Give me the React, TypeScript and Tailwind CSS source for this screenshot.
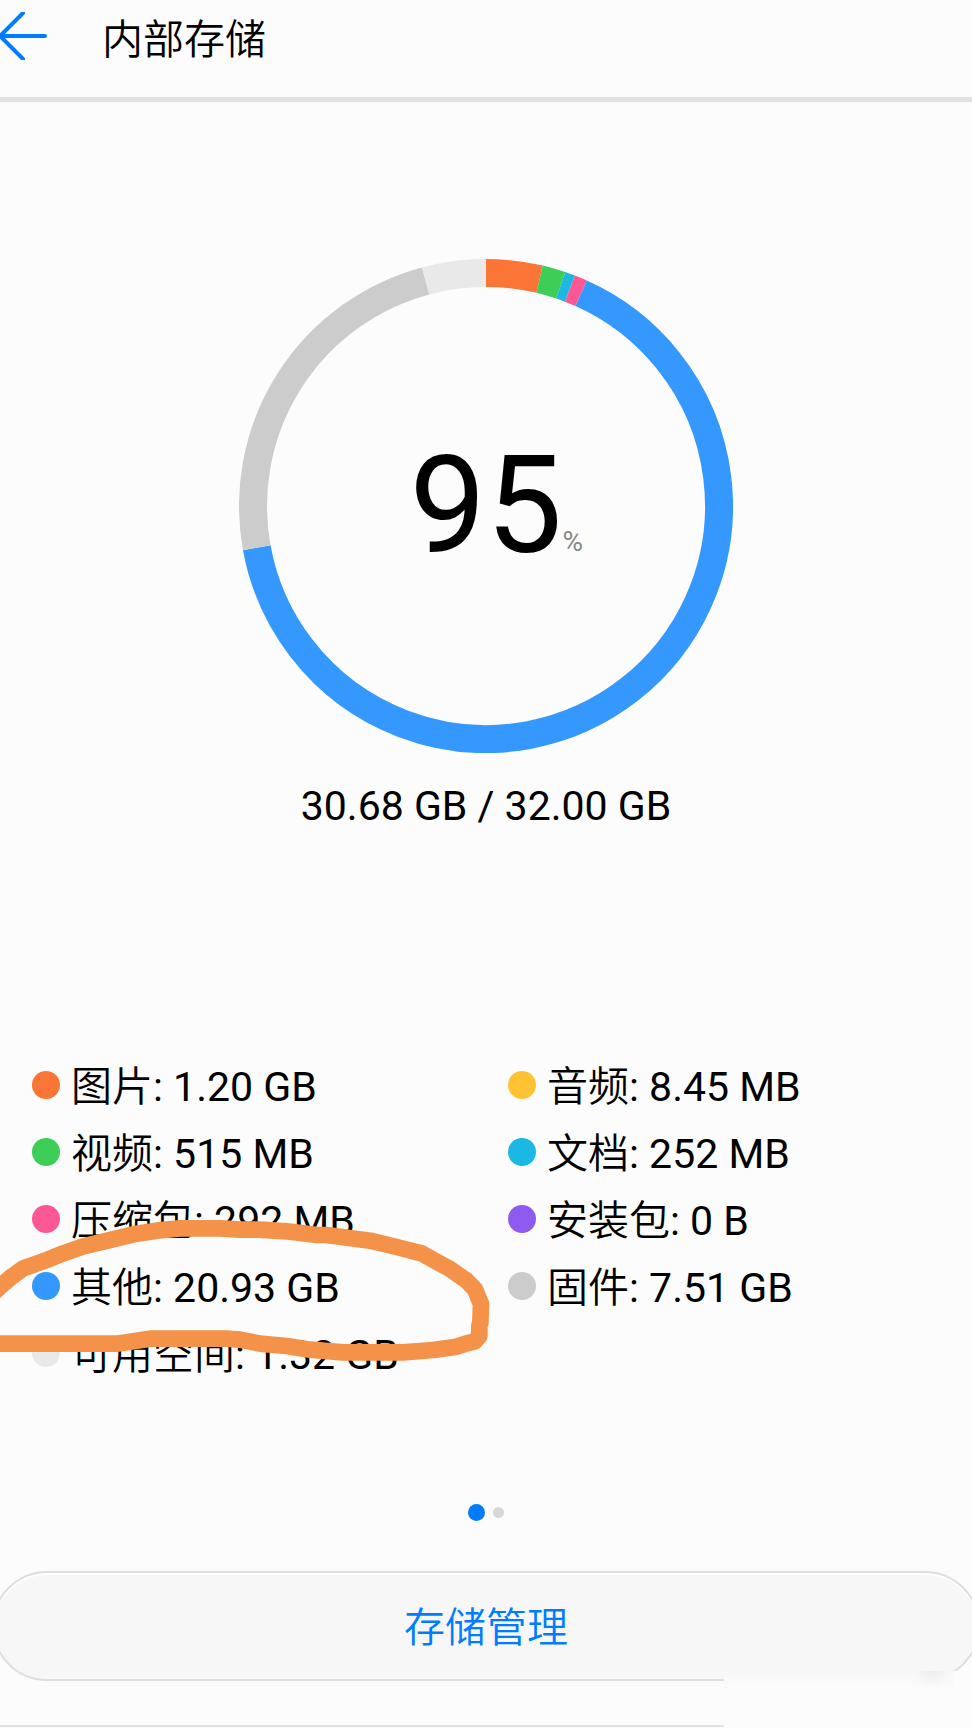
interface StorageItem {
  label: string;
  value: string;
  dot: string;
}

interface Segment {
  from: number;
  to: number;
  color: string;
}

const items: StorageItem[] = [
  { label: "图片", value: "1.20 GB", dot: "bg-[#fb7537]" },
  { label: "音频", value: "8.45 MB", dot: "bg-[#ffc233]" },
  { label: "视频", value: "515 MB", dot: "bg-[#3dce58]" },
  { label: "文档", value: "252 MB", dot: "bg-[#1ab8e3]" },
  { label: "压缩包", value: "292 MB", dot: "bg-[#fd5896]" },
  { label: "安装包", value: "0 B", dot: "bg-[#8e5af0]" },
  { label: "其他", value: "20.93 GB", dot: "bg-[#3598fe]" },
  { label: "固件", value: "7.51 GB", dot: "bg-[#cccccc]" },
  { label: "可用空间", value: "1.32 GB", dot: "bg-[#e9e9e9]" },
];

// Angles in degrees, clockwise from the top
const segments: Segment[] = [
  { from: 0, to: 13.3, color: "#fb7537" },
  { from: 13.3, to: 18.7, color: "#3dce58" },
  { from: 18.7, to: 21.1, color: "#1ab8e3" },
  { from: 21.1, to: 24.1, color: "#fd5896" },
  { from: 24.1, to: 259.7, color: "#3598fe" },
  { from: 259.7, to: 345, color: "#cccccc" },
  { from: 345, to: 360, color: "#e9e9e9" },
];

const arc = (from: number, to: number) => {
  const point = (deg: number) => {
    const a = (deg * Math.PI) / 180;
    return `${247 + 233 * Math.sin(a)} ${247 - 233 * Math.cos(a)}`;
  };
  return `M${point(from)} A233 233 0 ${to - from > 180 ? 1 : 0} 1 ${point(to)}`;
};

const UsageRing = () => (
  <div className="relative mx-auto mt-[157px] size-[494px]">
    <svg viewBox="0 0 494 494" className="size-full" fill="none" strokeWidth="28">
      {segments.map((s) => (
        <path key={s.from} d={arc(s.from, s.to)} stroke={s.color} />
      ))}
    </svg>
    <p className="absolute inset-0 flex items-center justify-center">
      <span className="relative text-[136px] leading-none">
        95
        <span className="absolute bottom-4 left-full text-[28px] leading-8 text-[#888888]">
          %
        </span>
      </span>
    </p>
  </div>
);

const App = () => {
  return (
    <div className="relative min-h-screen overflow-hidden bg-[#fcfcfc] font-['Roboto','Noto_Sans_CJK_SC',sans-serif] text-[41px] leading-12 text-black">
      <header className="flex h-[102px] items-start border-b-5 border-[#e1e1e1]">
        <button type="button" aria-label="返回" className="mt-3 h-12 w-12">
          <svg
            viewBox="0 0 48 48"
            className="size-12"
            fill="none"
            stroke="#007dff"
            strokeWidth="4"
            strokeLinecap="round"
            strokeLinejoin="round"
          >
            <path d="M45 24H1M23 1L0 24l23 23" />
          </svg>
        </button>
        <h1 className="mt-4 ml-[54px] font-[350]">内部存储</h1>
      </header>

      <main>
        <UsageRing />
        <p className="mt-[29px] text-center">30.68 GB / 32.00 GB</p>

        <section className="relative mt-[210px] pt-[11px]">
          <ul className="grid grid-cols-2 gap-x-11 px-8">
            {items.map((item) => (
              <li key={item.label} className="flex h-[67px] items-center gap-[11px] whitespace-nowrap">
                <span className={`size-7 shrink-0 rounded-full ${item.dot}`} />
                <span className="pt-1">
                  <span className="font-[350]">{item.label}</span>: {item.value}
                </span>
              </li>
            ))}
          </ul>
          {/* Hand-drawn marker around the biggest entry */}
          <svg
            viewBox="0 0 1500 1050"
            className="pointer-events-none absolute top-0 left-0 h-[350px] w-[500px]"
            fill="none"
            stroke="#f39248"
            strokeWidth="50"
            strokeLinejoin="round"
          >
            <path d="M-40 778L0 740L35 710L70 685L140 660L190 640L250 619L310 605L400 583L470 572L540 565H660L720 569H780L860 574L950 585H980L1110 602L1190 621L1267 641L1310 665L1350 687L1400 722L1425 748L1443 792L1441 850L1438 857V888L1424 904L1400 910L1370 920L1300 930L1210 937H1030L930 929L860 918L780 911L720 899L680 896H450L350 911H-40" />
          </svg>
        </section>

        <div className="mt-[118px] flex items-center justify-center gap-2">
          <span className="size-[17px] rounded-full bg-[#007dff]" />
          <span className="size-[11px] rounded-full bg-[#d8d8d8]" />
        </div>

        <div className="-mx-2 mt-[50px]">
          <button
            type="button"
            className="h-[110px] w-full rounded-full border-2 border-[#dfdfdf] bg-[#f7f7f7] pt-1 font-[350] text-[#007dff] shadow-[inset_0_2px_1px_#ffffff]"
          >
            存储管理
          </button>
        </div>
        <div className="mt-11 h-0.5 bg-[#e1e1e1]" />
      </main>

      {/* Faded patch in the bottom right corner */}
      <div className="absolute right-0 bottom-0 h-[57px] w-[248px] overflow-hidden bg-[#fcfcfc]">
        <div className="h-5 w-[230px] bg-linear-to-b from-[#f8f8f8] to-[#fcfcfc]" />
        <div className="absolute -top-4 right-5 h-8 w-10 rounded-full bg-[radial-gradient(closest-side,#eeeeee,transparent)]" />
      </div>
    </div>
  );
};

export default App;
